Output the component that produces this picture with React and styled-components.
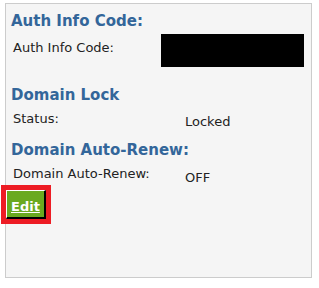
import React from 'react'
import styled, { createGlobalStyle } from 'styled-components'

const GlobalStyle = createGlobalStyle`
  html, body {
    margin: 0;
    padding: 0;
    background: #fff;
  }
  body {
    font-family: "DejaVu Sans", Verdana, sans-serif;
  }
`

const Page = styled.div`
  padding: 3px 0 0 5px;
`

const Panel = styled.div`
  width: 305px;
  height: 266px;
  background-color: #f5f5f5;
  border: 1px solid #cccccc;
  padding-top: 7px;
  box-sizing: content-box;
`

const Heading = styled.h3`
  margin: ${(p) => p.$top || 0}px 0 0 5px;
  font-size: 15px;
  line-height: 20px;
  font-weight: 700;
  color: #33669a;
`

const Row = styled.div`
  display: flex;
  align-items: flex-start;
  margin-top: ${(p) => p.$top || 0}px;
  padding-left: 7px;
`

const Label = styled.div`
  width: ${(p) => p.$width}px;
  padding-top: ${(p) => p.$pad || 0}px;
  font-size: 13px;
  line-height: 15px;
  color: #222;
`

const Value = styled.div`
  padding-top: ${(p) => p.$pad || 0}px;
  font-size: 13px;
  line-height: 15px;
  color: #222;
`

const Redacted = styled.div`
  width: 143px;
  height: 33px;
  background: #000;
`

const EditButton = styled.a`
  display: inline-block;
  margin-top: 5px;
  padding: 8px 4px 2px 4px;
  height: 16px;
  background-color: #6aa91f;
  border-top: 1px solid #fff;
  border-left: 1px solid #fff;
  border-right: 2px solid #000;
  border-bottom: 2px solid #000;
  color: #fff;
  font-size: 13px;
  line-height: 15px;
  font-weight: 700;
  text-decoration: underline;
  outline: 5px solid #ed1c24;
  cursor: pointer;
`

export default function App() {
  return (
    <>
      <GlobalStyle />
      <Page>
        <Panel>
          <Heading>Auth Info Code:</Heading>
          <Row $top={3}>
            <Label $width={148} $pad={6}>Auth Info Code:</Label>
            <Redacted />
          </Row>

          <Heading $top={18}>Domain Lock</Heading>
          <Row $top={6}>
            <Label $width={172}>Status:</Label>
            <Value $pad={3}>Locked</Value>
          </Row>

          <Heading $top={11}>Domain Auto-Renew:</Heading>
          <Row $top={6}>
            <Label $width={172}>Domain Auto-Renew:</Label>
            <Value $pad={4}>OFF</Value>
          </Row>

          <EditButton>Edit</EditButton>
        </Panel>
      </Page>
    </>
  )
}
